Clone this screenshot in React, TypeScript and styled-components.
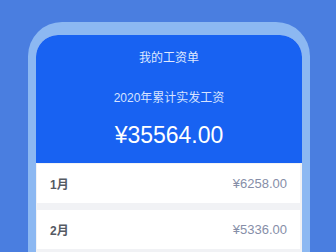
import React from "react";
import styled, { createGlobalStyle } from "styled-components";

const Global = createGlobalStyle`
  html, body { margin: 0; padding: 0; background: #4a7ee0; }
  body { width: 336px; height: 252px; overflow: hidden; font-family: "Liberation Sans", "Noto Sans CJK SC", sans-serif; }
`;

const Page = styled.div`
  width: 336px;
  height: 252px;
  overflow: hidden;
  background: #4a7ee0;
  padding: 22px 26px 0 28px;
  box-sizing: border-box;
`;

const Phone = styled.div`
  width: 282px;
  height: 260px;
  box-sizing: border-box;
  background: #8cb8f2;
  border-radius: 34px 34px 0 0;
  padding: 13px 8px 0 8px;
`;

const Screen = styled.div`
  height: 100%;
  border-radius: 22px 22px 0 0;
  overflow: hidden;
  background: #f1f2f5;
  display: flex;
  flex-direction: column;
`;

const Header = styled.div`
  background: #1862f2;
  display: flex;
  flex-direction: column;
  align-items: center;
  padding: 15px 0 14px;
  color: #fff;
`;

const Title = styled.div`
  font-size: 12px;
  line-height: 16px;
  color: #dfe8ff;
`;

const Subtitle = styled.div`
  margin-top: 24px;
  font-size: 12px;
  line-height: 16px;
  color: #d6e2ff;
`;

const Total = styled.div`
  margin-top: 15px;
  font-size: 23px;
  line-height: 28px;
  color: #ffffff;
`;

const List = styled.div`
  display: flex;
  flex-direction: column;
  gap: 7px;
  padding: 1px 2px 0 1px;
`;

const Row = styled.div`
  height: 39px;
  background: #fff;
  display: flex;
  align-items: center;
  justify-content: space-between;
  padding: 0 13px;
`;

const Month = styled.span`
  font-size: 12px;
  font-weight: bold;
  color: #555a63;
`;

const Amount = styled.span`
  font-size: 13px;
  color: #868ea8;
`;

const rows = [
  { m: "1月", v: "¥6258.00" },
  { m: "2月", v: "¥5336.00" },
];

export default function App() {
  return (
    <Page>
      <Global />
      <Phone>
        <Screen>
          <Header>
            <Title>我的工资单</Title>
            <Subtitle>2020年累计实发工资</Subtitle>
            <Total>¥35564.00</Total>
          </Header>
          <List>
            {rows.map((r) => (
              <Row key={r.m}>
                <Month>{r.m}</Month>
                <Amount>{r.v}</Amount>
              </Row>
            ))}
          </List>
        </Screen>
      </Phone>
    </Page>
  );
}
